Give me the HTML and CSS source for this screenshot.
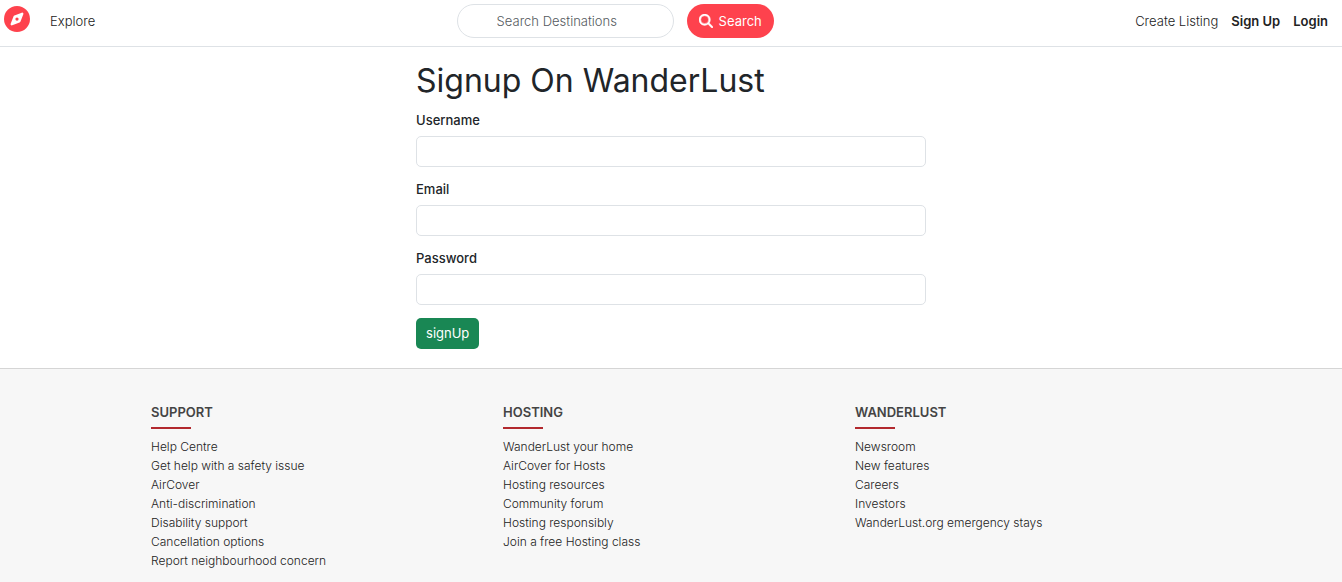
FILE: index.html
```html
<!DOCTYPE html>
<html lang="en">
<head>
<meta charset="utf-8">
<meta name="viewport" content="width=device-width, initial-scale=1">
<title>WanderLust</title>
<link rel="stylesheet" href="styles.css">
</head>
<body>
<header class="navbar">
  <div class="nav-start">
    <a class="brand" href="#" aria-label="Home">
      <svg viewBox="0 0 512 512" width="26" height="26" aria-hidden="true"><path fill="#fe424d" fill-rule="evenodd" d="M256 512A256 256 0 1 0 256 0a256 256 0 1 0 0 512zm50.700-186.900L162.400 380.600c-19.400 7.500-38.500-11.600-31-31l55.500-144.300c3.300-8.500 9.900-15.100 18.400-18.400l144.300-55.500c19.400-7.500 38.500 11.600 31 31L325.100 306.700c-3.200 8.500-9.900 15.100-18.400 18.400zM288 256a32 32 0 1 0-64 0 32 32 0 1 0 64 0z"/></svg>
    </a>
    <a class="nav-link" href="#">Explore</a>
  </div>
  <form class="search" role="search">
    <input class="search-input" type="search" placeholder="Search Destinations" aria-label="Search Destinations">
    <button class="search-button" type="button">
      <svg viewBox="0 0 512 512" width="14" height="14" aria-hidden="true"><path fill="currentColor" stroke="currentColor" stroke-width="16" d="M416 208c0 45.900-14.900 88.300-40 122.700L502.600 457.400c12.500 12.500 12.500 32.800 0 45.300s-32.800 12.500-45.300 0L330.700 376c-34.400 25.200-76.800 40-122.700 40C93.100 416 0 322.900 0 208S93.100 0 208 0S416 93.100 416 208zM208 352a144 144 0 1 0 0-288 144 144 0 1 0 0 288z"/></svg>
      <span>Search</span>
    </button>
  </form>
  <nav class="nav-end">
    <a class="nav-link" href="#">Create Listing</a>
    <a class="nav-link strong" href="#">Sign Up</a>
    <a class="nav-link strong" href="#">Login</a>
  </nav>
</header>
<main class="main">
  <h1 class="title">Signup On WanderLust</h1>
  <form class="signup">
    <div class="field">
      <label class="label" for="username">Username</label>
      <input class="control" id="username" type="text">
    </div>
    <div class="field">
      <label class="label" for="email">Email</label>
      <input class="control" id="email" type="email">
    </div>
    <div class="field">
      <label class="label" for="password">Password</label>
      <input class="control" id="password" type="password">
    </div>
    <button class="submit" type="button">signUp</button>
  </form>
</main>
<footer class="footer">
  <div class="footer-columns">
    <section class="footer-column">
      <h2 class="footer-title">SUPPORT</h2>
      <ul class="footer-list">
        <li><a href="#">Help Centre</a></li>
        <li><a href="#">Get help with a safety issue</a></li>
        <li><a href="#">AirCover</a></li>
        <li><a href="#">Anti-discrimination</a></li>
        <li><a href="#">Disability support</a></li>
        <li><a href="#">Cancellation options</a></li>
        <li><a href="#">Report neighbourhood concern</a></li>
      </ul>
    </section>
    <section class="footer-column">
      <h2 class="footer-title">HOSTING</h2>
      <ul class="footer-list">
        <li><a href="#">WanderLust your home</a></li>
        <li><a href="#">AirCover for Hosts</a></li>
        <li><a href="#">Hosting resources</a></li>
        <li><a href="#">Community forum</a></li>
        <li><a href="#">Hosting responsibly</a></li>
        <li><a href="#">Join a free Hosting class</a></li>
      </ul>
    </section>
    <section class="footer-column">
      <h2 class="footer-title">WANDERLUST</h2>
      <ul class="footer-list">
        <li><a href="#">Newsroom</a></li>
        <li><a href="#">New features</a></li>
        <li><a href="#">Careers</a></li>
        <li><a href="#">Investors</a></li>
        <li><a href="#">WanderLust.org emergency stays</a></li>
      </ul>
    </section>
  </div>
</footer>
</body>
</html>
```
FILE: styles.css
```css
* {
  box-sizing: border-box;
}

body {
  display: flex;
  flex-direction: column;
  min-height: 100vh;
  margin: 0;
  background: #fff;
  color: #212529;
  font-family: Inter, "Open Sans", sans-serif;
  font-size: 13px;
  line-height: 19px;
}

a {
  color: inherit;
  text-decoration: none;
}

input,
button {
  font: inherit;
}

.navbar {
  display: flex;
  align-items: center;
  justify-content: space-between;
  padding: 4px 14px 8px 4px;
  border-bottom: 1px solid #dee2e6;
}

.nav-start,
.nav-end,
.search {
  display: flex;
  align-items: center;
}

.nav-start {
  gap: 20px;
}

.nav-end {
  gap: 13px;
}

.brand {
  display: flex;
  padding-bottom: 4px;
}

.nav-link {
  color: #222;
  font-weight: 300;
}

.strong {
  font-weight: 600;
}

.search {
  gap: 13px;
}

.search-input {
  width: 217px;
  height: 34px;
  padding: 0 39px;
  border: 1px solid #dee2e6;
  border-radius: 17px;
  background: #fff;
  font-weight: 300;
}

.search-input::placeholder {
  color: #555a5e;
  opacity: 1;
}

.search-button {
  display: flex;
  align-items: center;
  justify-content: center;
  gap: 6px;
  height: 34px;
  padding: 0 12px;
  border: 0;
  border-radius: 17px;
  background: #fe424d;
  color: #fff;
}

.main {
  width: 38%;
  margin: 0 auto;
  padding: 13px 0 19px;
}

.title {
  margin: 0 0 10px;
  font-size: 32px;
  font-weight: 400;
  line-height: 41px;
}

.signup {
  display: flex;
  flex-direction: column;
  align-items: flex-start;
  gap: 13px;
}

.field {
  display: flex;
  flex-direction: column;
  gap: 6px;
  width: 100%;
}

.label {
  font-weight: 500;
}

.control {
  width: 100%;
  height: 31px;
  padding: 4px 10px;
  border: 1px solid #dee2e6;
  border-radius: 5px;
  background: #fff;
}

.submit {
  height: 31px;
  padding: 0 10px;
  border: 0;
  border-radius: 5px;
  background: #198754;
  color: #fff;
}

.footer {
  flex: 1;
  padding: 34px 16px 10px;
  border-top: 1px solid #d5d5d5;
  background: #f7f7f7;
}

.footer-columns {
  display: grid;
  grid-template-columns: repeat(3, 1fr);
  max-width: 1056px;
  margin: 0 auto;
}

.footer-column {
  padding: 0 8px;
}

.footer-title {
  margin: 0 0 8px;
  color: #444;
  font-size: 13px;
  font-weight: 600;
}

.footer-title::after {
  content: "";
  display: block;
  width: 40px;
  height: 2px;
  margin-top: 5px;
  background: #b2292e;
}

.footer-list {
  margin: 0;
  padding: 0;
  color: #222;
  font-size: 12px;
  font-weight: 300;
  list-style: none;
}
```
